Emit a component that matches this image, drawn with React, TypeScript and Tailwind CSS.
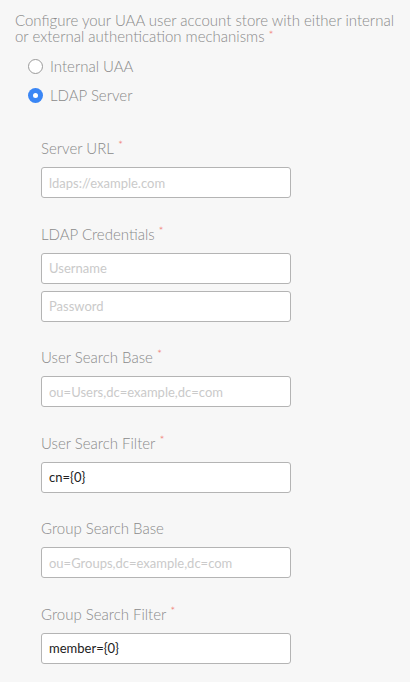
import React, { useState } from 'react';

const fields = [
  { label: 'Server URL', required: true, inputs: [{ placeholder: 'ldaps://example.com', value: '' }] },
  {
    label: 'LDAP Credentials',
    required: true,
    inputs: [
      { placeholder: 'Username', value: '' },
      { placeholder: 'Password', value: '' },
    ],
  },
  { label: 'User Search Base', required: true, inputs: [{ placeholder: 'ou=Users,dc=example,dc=com', value: '' }] },
  { label: 'User Search Filter', required: true, inputs: [{ placeholder: '', value: 'cn={0}' }] },
  { label: 'Group Search Base', required: false, inputs: [{ placeholder: 'ou=Groups,dc=example,dc=com', value: '' }] },
  { label: 'Group Search Filter', required: true, inputs: [{ placeholder: '', value: 'member={0}' }] },
];

function Asterisk() {
  return <span className="text-[#f07268] text-[12px] leading-[12px] align-top ml-[4px] relative top-[1px]">*</span>;
}

function Radio({ checked, label, onClick }: { checked: boolean; label: string; onClick: () => void }) {
  return (
    <button onClick={onClick} className="flex items-center h-[20px] text-left">
      {checked ? (
        <span className="w-[15px] h-[15px] rounded-full bg-[#3a86f5] flex items-center justify-center">
          <span className="w-[5px] h-[5px] rounded-full bg-white" />
        </span>
      ) : (
        <span className="w-[15px] h-[15px] rounded-full border border-[#9a9a9a] bg-white" />
      )}
      <span className="ml-[7px] text-[15px] leading-[20px] text-[#8a8a8a]">{label}</span>
    </button>
  );
}

export default function App() {
  const [mode, setMode] = useState<'internal' | 'ldap'>('ldap');

  return (
    <div
      className="min-h-screen bg-[#f7f7f7] px-[15px] pt-[12px] font-light"
      style={{ fontFamily: 'Lato, "Open Sans", sans-serif' }}
    >
      {/* Store type */}
      <p className="text-[15px] leading-[16px] text-[#8a8a8a] whitespace-nowrap">
        Configure your UAA user account store with either internal
        <br />
        or external authentication mechanisms
        <Asterisk />
      </p>

      <div className="mt-[12px] ml-[13px] flex flex-col gap-[9px]">
        <Radio checked={mode === 'internal'} label="Internal UAA" onClick={() => setMode('internal')} />
        <Radio checked={mode === 'ldap'} label="LDAP Server" onClick={() => setMode('ldap')} />
      </div>

      {/* LDAP settings */}
      {mode === 'ldap' && (
        <div className="mt-[33px] ml-[26px] flex flex-col">
          {fields.map((f) => (
            <div key={f.label} className="mb-[25.5px]">
              <div className="h-[20px] leading-[20px] text-[15px] text-[#8a8a8a] mb-[9px]">
                {f.label}
                {f.required && <Asterisk />}
              </div>
              <div className="flex flex-col gap-[7px]">
                {f.inputs.map((inp, i) => (
                  <input
                    key={i}
                    defaultValue={inp.value}
                    placeholder={inp.placeholder}
                    className="w-[250px] h-[31px] px-[7px] bg-white border border-[#b4b4b4] rounded-[3px] text-[13px] font-normal text-[#222] placeholder:text-[#cacaca] outline-none"
                  />
                ))}
              </div>
            </div>
          ))}
        </div>
      )}
    </div>
  );
}
